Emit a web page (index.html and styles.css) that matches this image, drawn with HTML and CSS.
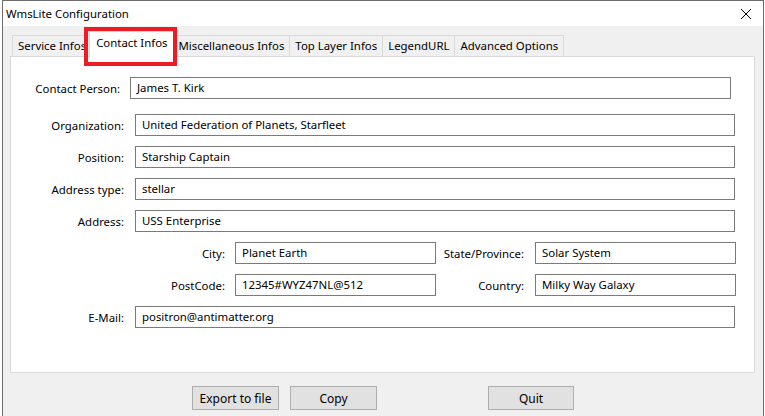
FILE: index.html
```html
<!DOCTYPE html>
<html>
    <head>
        <title>WmsLite Configuration</title>
        <meta charset="UTF-8">
        <link rel="stylesheet" href="styles.css">
    </head>
    <body>
        <div class="window">
            <div class="titlebar">
                <span class="title">WmsLite Configuration</span>
                <svg class="close" width="12" height="12" viewBox="0 0 12 12">
                    <path d="M1 1 L11 11 M11 1 L1 11" stroke="#000" stroke-width="1" fill="none"/>
                </svg>
            </div>

            <div class="content">
                <div class="tabs">
                    <div class="tab">Service Infos</div>
                    <div class="tab selected">Contact Infos<span class="marker"></span></div>
                    <div class="tab">Miscellaneous Infos</div>
                    <div class="tab">Top Layer Infos</div>
                    <div class="tab">LegendURL</div>
                    <div class="tab">Advanced Options</div>
                </div>

                <div class="panel">
                    <div class="row first">
                        <label class="lbl narrow">Contact Person:</label>
                        <div class="field contact">James T. Kirk</div>
                    </div>
                    <div class="row">
                        <label class="lbl">Organization:</label>
                        <div class="field wide">United Federation of Planets, Starfleet</div>
                    </div>
                    <div class="row">
                        <label class="lbl">Position:</label>
                        <div class="field wide">Starship Captain</div>
                    </div>
                    <div class="row">
                        <label class="lbl">Address type:</label>
                        <div class="field wide">stellar</div>
                    </div>
                    <div class="row">
                        <label class="lbl">Address:</label>
                        <div class="field wide">USS Enterprise</div>
                    </div>
                    <div class="row">
                        <label class="lbl long">City:</label>
                        <div class="field half">Planet Earth</div>
                        <label class="lbl mid">State/Province:</label>
                        <div class="field half">Solar System</div>
                    </div>
                    <div class="row">
                        <label class="lbl long">PostCode:</label>
                        <div class="field half">12345#WYZ47NL@512</div>
                        <label class="lbl mid">Country:</label>
                        <div class="field half">Milky Way Galaxy</div>
                    </div>
                    <div class="row">
                        <label class="lbl">E-Mail:</label>
                        <div class="field wide">positron@antimatter.org</div>
                    </div>
                </div>

                <div class="buttons">
                    <button class="btn">Export to file</button>
                    <button class="btn">Copy</button>
                    <button class="btn quit">Quit</button>
                </div>
            </div>
        </div>
    </body>
</html>
```

FILE: styles.css
```css
html, body {
    margin: 0;
    padding: 0;
    overflow: hidden;
}

body {
    font-family: "Noto Sans", "Open Sans", sans-serif;
    font-size: 11.4px;
    color: #000;
    background: #fff;
}

.window {
    margin-left: 2px;
    width: 760px;
    height: 430px;
    border: 1px solid #6d6d6d;
    background: #f0f0f0;
}

.titlebar {
    height: 25px;
    background: #fff;
    display: flex;
    align-items: center;
    justify-content: space-between;
    padding: 0 11px 0 3px;
}

.title {
    margin-top: -1px;
}

.content {
    padding: 9px 8px 0 7px;
}

/* tab strip */
.tabs {
    display: flex;
    margin-left: 2px;
    height: 21px;
    position: relative;
    z-index: 2;
}

.tab {
    height: 20px;
    line-height: 20px;
    padding: 0 5px;
    border: 1px solid #d9d9d9;
    border-bottom: none;
    margin-right: -1px;
    background: #f0f0f0;
    white-space: nowrap;
}

.tab.selected {
    position: relative;
    background: #fff;
    height: 26px;
    line-height: 21px;
    margin: -4px -2px 0 -2px;
    padding: 0 6px;
    z-index: 3;
}

.marker {
    position: absolute;
    left: -6px;
    top: -5px;
    right: -4px;
    bottom: -8px;
    border: 4px solid #ed1c24;
}

.panel {
    background: #fff;
    border: 1px solid #d9d9d9;
    padding-top: 20px;
    box-sizing: border-box;
    height: 317px;
}

.row {
    display: flex;
    align-items: center;
    margin-bottom: 10px;
}

.row.first {
    margin-bottom: 15px;
}

.lbl {
    width: 113px;
    text-align: right;
    padding-right: 11px;
    white-space: nowrap;
}

.lbl.narrow {
    width: 109px;
    padding-right: 10px;
}

.lbl.long {
    width: 214px;
    padding-right: 10px;
}

.lbl.mid {
    width: 88px;
    padding-right: 11px;
}

.field {
    box-sizing: border-box;
    height: 22px;
    line-height: 20px;
    border: 1px solid #7a7a7a;
    padding-left: 6px;
    background: #fff;
    white-space: nowrap;
}

.field.contact { width: 601px; }
.field.wide { width: 600px; }
.field.half { width: 201px; }

.buttons {
    display: flex;
    padding: 13px 0 0 182px;
}

.btn {
    width: 87px;
    height: 24px;
    margin-right: 11px;
    font-family: inherit;
    font-size: 12px;
    background: #e1e1e1;
    border: 1px solid #adadad;
    padding: 0;
}

.btn.quit {
    width: 86px;
    margin-left: 100px;
}
```
